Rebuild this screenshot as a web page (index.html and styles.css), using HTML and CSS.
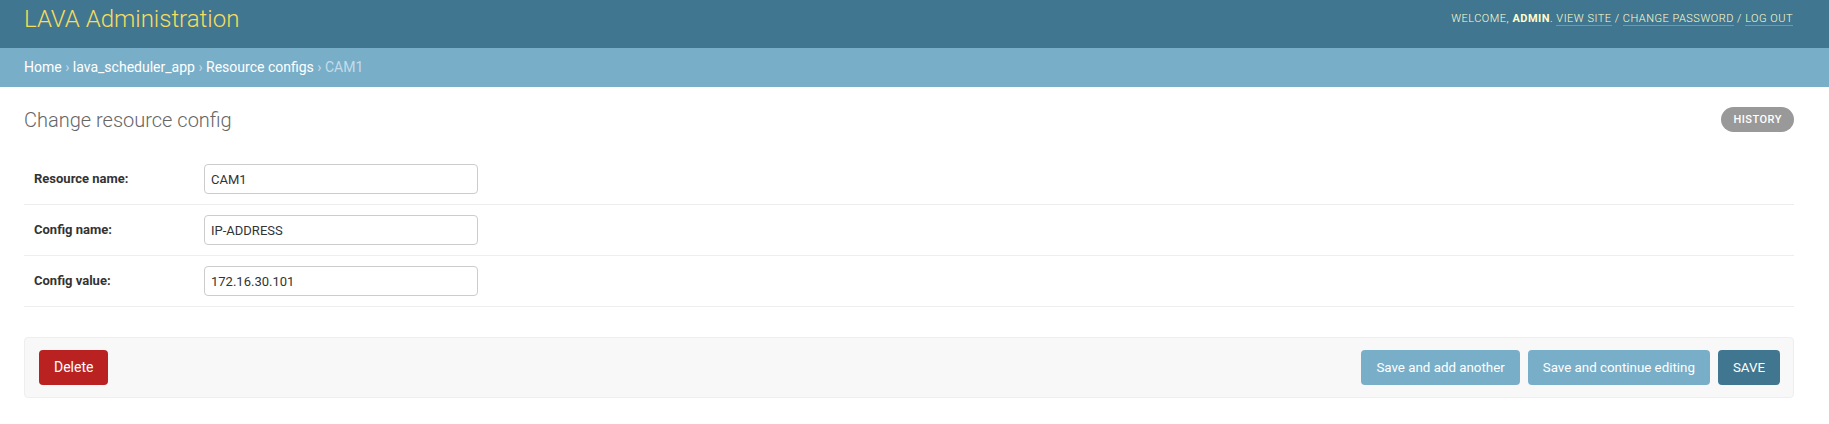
FILE: index.html
```html
<!DOCTYPE html>
<html lang="en">
<head>
  <meta charset="UTF-8">
  <title>Change resource config | LAVA Administration</title>
  <link rel="stylesheet" href="styles.css">
</head>
<body>

  <div id="header">
    <h1 id="site-name"><a href="#">LAVA Administration</a></h1>
    <div id="user-tools">
      Welcome, <strong>admin</strong>.
      <a href="#">View site</a> /
      <a href="#">Change password</a> /
      <a href="#">Log out</a>
    </div>
  </div>

  <div class="breadcrumbs">
    <a href="#">Home</a> &rsaquo;
    <a href="#">lava_scheduler_app</a> &rsaquo;
    <a href="#">Resource configs</a> &rsaquo;
    CAM1
  </div>

  <div id="content">
    <div class="content-head">
      <h1>Change resource config</h1>
      <ul class="object-tools">
        <li><a href="#" class="historylink">History</a></li>
      </ul>
    </div>

    <form>
      <fieldset class="module aligned">
        <div class="form-row">
          <label for="id_resource_name">Resource name:</label>
          <input type="text" id="id_resource_name" value="CAM1">
        </div>
        <div class="form-row">
          <label for="id_config_name">Config name:</label>
          <input type="text" id="id_config_name" value="IP-ADDRESS">
        </div>
        <div class="form-row">
          <label for="id_config_value">Config value:</label>
          <input type="text" id="id_config_value" value="172.16.30.101">
        </div>
      </fieldset>

      <div class="submit-row">
        <a href="#" class="deletelink">Delete</a>
        <div class="submit-buttons">
          <input type="submit" value="Save and add another">
          <input type="submit" value="Save and continue editing">
          <input type="submit" value="Save" class="default">
        </div>
      </div>
    </form>
  </div>

</body>
</html>
```

FILE: styles.css
```css
body {
  margin: 0;
  padding: 0;
  font-family: Roboto, "Liberation Sans", Arial, sans-serif;
  font-size: 14px;
  color: #333;
  background: #fff;
}

a {
  text-decoration: none;
}

/* header */

#header {
  height: 48px;
  box-sizing: border-box;
  padding: 0 36px 0 24px;
  background: #417690;
  color: #ffc;
  display: flex;
  justify-content: space-between;
  align-items: flex-start;
}

#site-name {
  margin: 5px 0 0;
  font-size: 24px;
  line-height: 28px;
  font-weight: 300;
}

#site-name a {
  color: #f5dd5d;
}

#user-tools {
  margin-top: 12px;
  font-size: 11px;
  font-weight: 300;
  letter-spacing: 0.5px;
  text-transform: uppercase;
}

#user-tools strong {
  font-weight: 700;
  color: #ffc;
}

#user-tools a {
  color: #ffc;
  border-bottom: 1px solid rgba(255, 255, 255, 0.25);
}

/* breadcrumbs */

.breadcrumbs {
  height: 39px;
  box-sizing: border-box;
  padding: 10px 24px 0;
  background: #79aec8;
  color: #c4dce8;
  font-size: 14px;
  line-height: 19px;
}

.breadcrumbs a {
  color: #fff;
}

/* content */

#content {
  padding: 20px 35px 0 24px;
}

.content-head {
  display: flex;
  justify-content: space-between;
  align-items: flex-start;
  margin-bottom: 22px;
}

.content-head h1 {
  margin: 1px 0 0;
  font-size: 20px;
  font-weight: 300;
  color: #666;
}

.object-tools {
  list-style: none;
  margin: 0;
  padding: 0;
}

.object-tools a {
  display: block;
  padding: 0 12px;
  height: 25px;
  line-height: 25px;
  border-radius: 15px;
  background: #999;
  color: #fff;
  font-size: 11px;
  font-weight: 500;
  letter-spacing: 0.5px;
  text-transform: uppercase;
}

fieldset {
  margin: 0;
  padding: 0;
  border: none;
}

.form-row {
  display: flex;
  padding: 10px;
  border-bottom: 1px solid #eee;
}

.form-row label {
  width: 160px;
  padding: 5px 10px 0 0;
  line-height: 20px;
  font-size: 13px;
  font-weight: 700;
  color: #333;
}

.form-row input {
  width: 274px;
  height: 30px;
  box-sizing: border-box;
  margin: 0;
  padding: 5px 6px;
  border: 1px solid #ccc;
  border-radius: 4px;
  font-family: inherit;
  font-size: 13px;
  color: #333;
}

/* submit row */

.submit-row {
  display: flex;
  justify-content: space-between;
  align-items: center;
  margin-top: 30px;
  padding: 12px 13px 12px 14px;
  background: #f8f8f8;
  border: 1px solid #eee;
  border-radius: 4px;
}

.submit-buttons {
  display: flex;
  gap: 8px;
}

.submit-row input,
.deletelink {
  height: 35px;
  box-sizing: border-box;
  padding: 0 15px;
  border: none;
  border-radius: 4px;
  color: #fff;
  font-family: inherit;
  font-size: 13.333px;
  line-height: 35px;
}

.submit-row input {
  background: #79aec8;
  cursor: pointer;
}

.submit-row input.default {
  background: #417690;
  text-transform: uppercase;
}

.deletelink {
  display: block;
  background: #ba2121;
  font-size: 14px;
}
```
